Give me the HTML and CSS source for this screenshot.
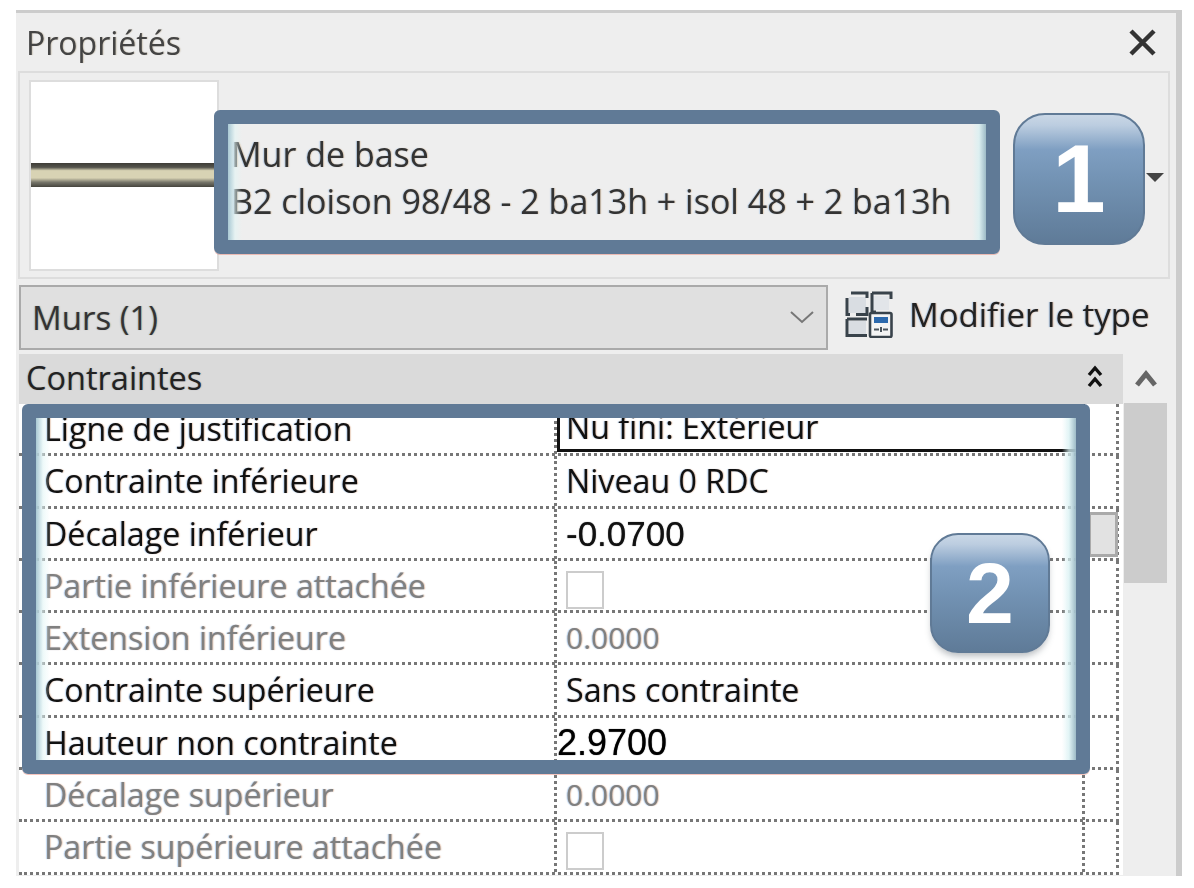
FILE: index.html
```html
<!DOCTYPE html>
<html lang="fr">

<head>
    <meta charset="UTF-8">
    <title>Propriétés</title>
    <link rel="stylesheet" href="styles.css">
</head>

<body>
    <div class="panel">
        <div class="title-bar soft">
            <span class="title">Propriétés</span>
            <svg class="close" viewBox="0 0 29 27">
                <path d="M3 2 L26 25 M26 2 L3 25" fill="none" stroke="#333" stroke-width="4.5" />
            </svg>
        </div>

        <div class="type-box soft">
            <div class="thumb">
                <div class="wall"></div>
            </div>
            <div class="type-name">
                <div>Mur de base</div>
                <div>B2 cloison 98/48 - 2 ba13h + isol 48 + 2 ba13h</div>
            </div>
            <div class="type-arrow"></div>
        </div>

        <div class="selector-row soft">
            <div class="select">
                <span>Murs (1)</span>
                <svg class="chevron" viewBox="0 0 26 14">
                    <path d="M2 2 L13 12 L24 2" fill="none" stroke="#777" stroke-width="2" />
                </svg>
            </div>
            <button class="edit-type">
                <svg class="edit-icon" viewBox="0 0 48 47">
                    <path d="M4 6 H21 V22 H4 Z" fill="#d9dde2" />
                    <path d="M4 30 H21 V44 H4 Z" fill="#d9dde2" />
                    <path d="M27 5 H44 V19 H27 Z" fill="#e2e5e9" />
                    <path d="M6 2 H22 V7 M22 16 V23.5 H11 M2 7 V23.5 H5" fill="none" stroke="#39434b" stroke-width="3" />
                    <path d="M2 28 V44.5 H22 M2 28 H22" fill="none" stroke="#39434b" stroke-width="3" />
                    <path d="M27 2 H46 V8 M27 2 V21 H31" fill="none" stroke="#39434b" stroke-width="3" />
                    <rect x="25" y="22" width="21.5" height="24" rx="1.5" fill="#f4f4f4" stroke="#39434b" stroke-width="2.6" />
                    <rect x="29" y="26" width="14" height="6" fill="#2c69ad" />
                    <path d="M29 38.5 H34 M38 38.5 H43 M36 36 V41" stroke="#4a545c" stroke-width="2" fill="none" />
                </svg>
                <span>Modifier le type</span>
            </button>
        </div>

        <div class="props-area soft">
            <div class="props">
                <div class="section-head">
                    <span>Contraintes</span>
                    <svg class="collapse" viewBox="0 0 16 24">
                        <path d="M2 10 L8 3 L14 10 M2 21 L8 14 L14 21" fill="none" stroke="#111" stroke-width="3.4" />
                    </svg>
                </div>
                <div class="row">
                    <div class="label">Ligne de justification</div>
                    <div class="value active">Nu fini: Extérieur</div>
                    <div class="extra"></div>
                </div>
                <div class="row">
                    <div class="label">Contrainte inférieure</div>
                    <div class="value">Niveau 0 RDC</div>
                    <div class="extra"></div>
                </div>
                <div class="row">
                    <div class="label">Décalage inférieur</div>
                    <div class="value number">-0.0700</div>
                    <div class="extra"><span class="more"></span></div>
                </div>
                <div class="row off">
                    <div class="label">Partie inférieure attachée</div>
                    <div class="value"><span class="check"></span></div>
                    <div class="extra"></div>
                </div>
                <div class="row off">
                    <div class="label">Extension inférieure</div>
                    <div class="value thin">0.0000</div>
                    <div class="extra"></div>
                </div>
                <div class="row">
                    <div class="label">Contrainte supérieure</div>
                    <div class="value">Sans contrainte</div>
                    <div class="extra"></div>
                </div>
                <div class="row">
                    <div class="label">Hauteur non contrainte</div>
                    <div class="value number flush">2.9700</div>
                    <div class="extra"></div>
                </div>
                <div class="row off">
                    <div class="label">Décalage supérieur</div>
                    <div class="value thin">0.0000</div>
                    <div class="extra"></div>
                </div>
                <div class="row off">
                    <div class="label">Partie supérieure attachée</div>
                    <div class="value"><span class="check"></span></div>
                    <div class="extra"></div>
                </div>
            </div>
            <div class="scrollbar">
                <svg class="scroll-up" viewBox="0 0 22 18">
                    <path d="M2 16 L11 5 L20 16" fill="none" stroke="#666" stroke-width="5" />
                </svg>
                <div class="scroll-thumb"></div>
            </div>
        </div>

        <!-- callouts on top of the screenshot -->
        <div class="callout callout-1"></div>
        <div class="callout callout-2"></div>
        <div class="badge badge-1">1</div>
        <div class="badge badge-2">2</div>
    </div>
</body>

</html>
```

FILE: styles.css
```css
body {
    margin: 0;
    background-color: #fff;
    font-family: "Open Sans", "Noto Sans", sans-serif;
    overflow: hidden;
}

.panel {
    position: relative;
    box-sizing: border-box;
    width: 1166px;
    height: 866px;
    margin: 10px 0 0 16px;
    background-color: #eee;
    border-top: 3px solid #ccc;
    border-right: 6px solid #ccc;
    overflow: hidden;
}

/* the screenshot under the callouts is an upscaled capture */
.soft {
    filter: blur(.4px);
}

.title-bar {
    display: flex;
    justify-content: space-between;
    align-items: center;
    height: 58px;
    padding: 0 19px 0 10px;
}

.title {
    font-size: 32px;
    color: #444;
    text-shadow: 1px 0 1px rgba(120, 90, 40, .25);
}

.close {
    width: 29px;
    height: 27px;
}

.type-box {
    position: relative;
    box-sizing: border-box;
    display: flex;
    align-items: center;
    height: 208px;
    width: 1152px;
    margin-left: 2px;
    border: 2px solid #ddd;
    padding-left: 9px;
}

.thumb {
    display: flex;
    align-items: center;
    box-sizing: border-box;
    width: 190px;
    height: 191px;
    background-color: #fff;
    border: 2px solid #ddd;
}

.wall {
    flex: 1;
    height: 24px;
    background: linear-gradient(#3e3c36 0, #55544c 18%, #d8d3b4 32%, #d8d3b4 62%, #77766a 80%, #45443d 100%);
}

.type-name {
    margin: 6px 0 0 12px;
    font-size: 34px;
    line-height: 47px;
    color: #333;
    white-space: nowrap;
    text-shadow: 1px 0 1px rgba(180, 110, 30, .25), -1px 0 1px rgba(30, 110, 200, .25);
}

.type-arrow {
    position: absolute;
    right: 4px;
    top: 100px;
    border-left: 9px solid transparent;
    border-right: 9px solid transparent;
    border-top: 9px solid #444;
}

.selector-row {
    display: flex;
    align-items: center;
    height: 75px;
    margin-left: 3px;
}

.select {
    box-sizing: border-box;
    display: flex;
    justify-content: space-between;
    align-items: center;
    width: 809px;
    height: 65px;
    margin-top: 1px;
    padding: 0 11px 0 11px;
    background-color: #e0e0e0;
    border: 2px solid #aaa;
    font-size: 33px;
    color: #333;
    text-shadow: 1px 0 1px rgba(180, 110, 30, .25), -1px 0 1px rgba(30, 110, 200, .25);
}

.chevron {
    width: 26px;
    height: 14px;
}

.edit-type {
    display: flex;
    align-items: center;
    gap: 16px;
    margin: -5px 0 0 17px;
    padding: 0;
    border: none;
    background: none;
    font-family: inherit;
    font-size: 33px;
    color: #222;
    white-space: nowrap;
    text-shadow: 1px 0 1px rgba(180, 90, 30, .3), -1px 0 1px rgba(30, 110, 200, .3);
}

.edit-icon {
    width: 48px;
    height: 47px;
}

.props-area {
    display: flex;
    align-items: flex-start;
    height: 522px;
}

.props {
    width: 1104px;
    margin-left: 3px;
    background-color: #fff;
}

.section-head {
    display: flex;
    justify-content: space-between;
    align-items: center;
    box-sizing: border-box;
    height: 50px;
    padding: 0 20px 4px 7px;
    background-color: #dadada;
    font-size: 32.5px;
    color: #222;
    text-shadow: 1px 0 1px rgba(180, 90, 30, .2), -1px 0 1px rgba(30, 110, 200, .2);
}

.collapse {
    width: 16px;
    height: 24px;
}

.row {
    display: grid;
    grid-template-columns: 538px 528px 31px;
    box-sizing: border-box;
    width: 1100px;
    height: 52.3px;
    border-bottom: 3px dotted #777;
    border-right: 3px dotted #777;
    font-size: 32.2px;
    color: #111;
    white-space: nowrap;
    text-shadow: 1px 0 1px rgba(180, 90, 30, .3), -1px 0 1px rgba(30, 110, 200, .3);
}

.row.off {
    color: #808080;
}

.label {
    padding-left: 25px;
    line-height: 50px;
    border-right: 3px dotted #777;
}

.value {
    position: relative;
    padding-left: 9px;
    line-height: 50px;
    border-right: 3px dotted #777;
}

.value.active {
    box-sizing: border-box;
    height: 48px;
    line-height: 46px;
    border: 3px solid #111;
    border-top: none;
    padding-left: 6px;
}

.value.number {
    font-family: "Liberation Sans", Arial, sans-serif;
    font-size: 35px;
    color: #111;
    text-shadow: 0 0 1px #444;
}

.value.thin {
    font-size: 30px;
}

.value.flush {
    padding-left: 0;
    font-size: 36px;
    color: #000;
}

.check {
    display: block;
    width: 34px;
    height: 34px;
    margin-top: 10px;
    background-color: #fff;
    border: 2px solid #ccc;
}

.more {
    display: block;
    box-sizing: border-box;
    width: 28px;
    height: 45px;
    margin: 3px 0 0 5px;
    background-color: #e2e2e2;
    border: 3px solid #aaa;
    border-left-width: 1px;
}

.scrollbar {
    width: 45px;
    margin-left: 1px;
}

.scroll-up {
    display: block;
    width: 22px;
    height: 18px;
    margin: 15px 0 0 11px;
}

.scroll-thumb {
    width: 43px;
    height: 180px;
    margin-top: 16px;
    background-color: #ccc;
}

.callout {
    position: absolute;
    box-sizing: border-box;
    border: 14px solid #607a96;
    border-radius: 6px;
    box-shadow: 0 1px 0 rgba(230, 90, 70, .35);
}

.callout::before,
.callout::after {
    content: "";
    position: absolute;
    top: 0;
    bottom: 0;
    width: 14px;
}

.callout::before {
    left: 0;
    background: linear-gradient(to right, #a9c9d4, rgba(225, 245, 245, .6) 50%, rgba(255, 255, 255, 0));
}

.callout::after {
    right: 0;
    background: linear-gradient(to left, #9dbac6, rgba(215, 240, 242, .75) 50%, rgba(255, 255, 255, 0));
}

.callout-1 {
    left: 198px;
    top: 97px;
    width: 786px;
    height: 144px;
}

.callout-2 {
    left: 6px;
    top: 391px;
    width: 1068px;
    height: 370px;
}

.badge {
    position: absolute;
    display: flex;
    justify-content: center;
    align-items: center;
    box-sizing: border-box;
    border: 2px solid #607a96;
    background: linear-gradient(#c9d7e6 0, #bccde0 8%, #7f9fc2 27%, #7393b4 50%, #5f7b98 100%);
    color: #fff;
    font-family: "Liberation Sans", Arial, sans-serif;
    font-weight: bold;
}

.badge-1 {
    left: 997px;
    top: 100px;
    width: 132px;
    height: 132px;
    border-radius: 32px;
    font-size: 96px;
}

.badge-2 {
    left: 914px;
    top: 520px;
    width: 120px;
    height: 120px;
    border-radius: 28px;
    font-size: 86px;
    box-shadow: 0 5px 7px -2px rgba(70, 80, 90, .4);
}
```
